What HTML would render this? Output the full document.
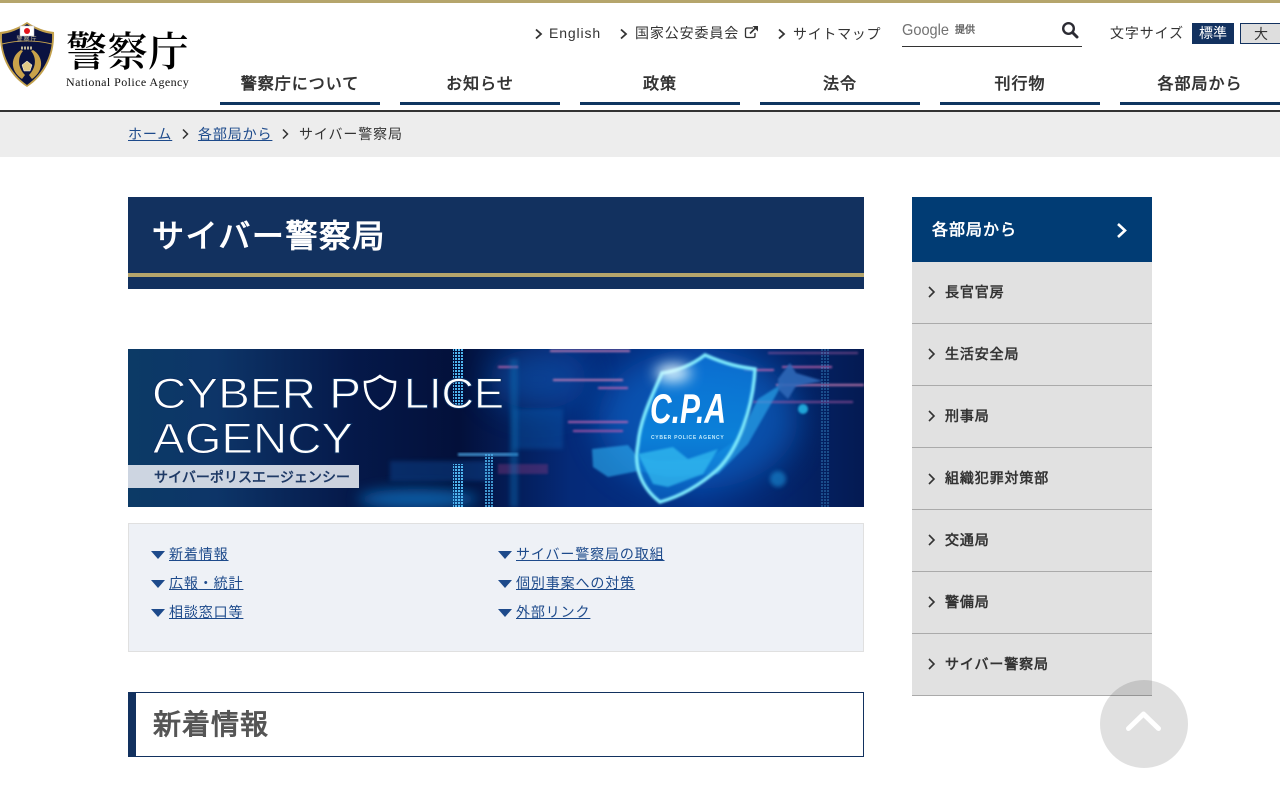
<!DOCTYPE html>
<html lang="ja"><head><meta charset="utf-8"><title>サイバー警察局</title>
<style>
html,body{margin:0;padding:0;background:#fff}
body{position:relative;width:1280px;height:800px;overflow:hidden;font-family:"Liberation Sans","WenQuanYi Zen Hei",sans-serif;color:#333;font-size:14px;letter-spacing:.88px}
.a{position:absolute;white-space:nowrap}
a{color:#1d4a8b;text-decoration:underline}
.nav{position:absolute;top:73px;width:160px;height:29px;border-bottom:3px solid #0f3560;text-align:center;font-weight:bold;font-size:16px;line-height:24px;color:#333;letter-spacing:1px}
.t{line-height:20px}
.side{position:absolute;left:912px;width:240px;height:61px;background:#e1e1e1;border-bottom:1px solid #aaa;font-weight:bold;font-size:14px;line-height:60px;text-indent:33px;color:#333}
.ch{position:absolute}
.tri{position:absolute;width:0;height:0;border-left:7px solid transparent;border-right:7px solid transparent;border-top:8px solid #1d4a8b}
.dot{font-family:"Noto Sans CJK JP",sans-serif}
</style></head><body>
<div class="a" style="left:0;top:0;width:1280px;height:3px;background:#b5a56c"></div>

<svg class="a" style="left:0;top:20px" width="56" height="70" viewBox="0 0 56 70">
<path d="M27 2 C36 8 45 11 54 12 C55 34 46 55 27 67 C8 55 -1 34 0 12 C9 11 18 8 27 2Z" fill="#c2a04c"/>
<path d="M27 4 C36 10 44 13 52 14 C53 34 44 53 27 65 C10 53 1 34 2 14 C10 13 18 10 27 4Z" fill="#0a1240"/>
<rect x="20" y="6" width="14" height="10" fill="#fff" stroke="#b9b9c9" stroke-width=".5"/><circle cx="27" cy="11" r="3" fill="#e3141c"/>
<path d="M2 24 C18 20 36 20 52 24" stroke="#c2a04c" fill="none" stroke-width="1"/>
<text x="27" y="21" font-size="6" fill="#c9c2a0" text-anchor="middle" letter-spacing="1">警察庁</text>
<path d="M21 30 C11 36 9 50 22 59 L25 55 C18 48 17 38 23 31Z M33 30 C43 36 45 50 32 59 L29 55 C36 48 37 38 31 31Z" fill="#c9a24a"/>
<path d="M27 41 L32 45 L30 51 H24 L22 45Z" fill="#e0c987" stroke="#fff" stroke-width=".5"/>
<path d="M21 28 H33" stroke="#bfb79a" stroke-width="3" stroke-dasharray="2 1"/>
</svg>
<div class="a" style="left:66px;top:26px;font-family:'Liberation Serif','Noto Serif CJK JP','Noto Serif CJK SC',serif;font-size:41px;line-height:52px;letter-spacing:0;color:#000;font-weight:600">警察庁</div>
<div class="a" style="left:66px;top:74px;font-family:'Liberation Serif',serif;font-size:12px;line-height:16px;letter-spacing:.42px;color:#111">National Police Agency</div>

<svg class="ch" style="left:534px;top:28px" width="9" height="12"><path d="M2 1.5 L7 6 L2 10.5" fill="none" stroke="#333" stroke-width="1.8"/></svg>
<div class="a t" style="left:549px;top:23px">English</div>
<svg class="ch" style="left:619px;top:28px" width="9" height="12"><path d="M2 1.5 L7 6 L2 10.5" fill="none" stroke="#333" stroke-width="1.8"/></svg>
<div class="a t" style="left:635px;top:23px">国家公安委員会</div>
<svg class="ch" style="left:744px;top:25px" width="15" height="14"><path d="M9 3 H3 Q1.5 3 1.5 4.5 V11 Q1.5 12.5 3 12.5 H9.500 Q11 12.500 11 11 V8" fill="none" stroke="#333" stroke-width="1.300"/><path d="M6 8.500 L12 2.500" stroke="#333" stroke-width="1.600"/><path d="M8.500 1 H14 V6.500Z" fill="#333"/></svg>
<svg class="ch" style="left:777px;top:28px" width="9" height="12"><path d="M2 1.5 L7 6 L2 10.5" fill="none" stroke="#333" stroke-width="1.8"/></svg>
<div class="a t" style="left:793px;top:24px;letter-spacing:.7px">サイトマップ</div>

<svg class="a" style="left:902px;top:18px" width="50" height="24"><text x="0" y="17" font-family="Liberation Sans,sans-serif" font-size="16" fill="#727272" textLength="47" lengthAdjust="spacingAndGlyphs" letter-spacing="0">Google</text></svg>
<div class="a" style="left:955px;top:24px;font-size:10px;line-height:14px;letter-spacing:0;color:#666;font-weight:bold">提供</div>
<div class="a" style="left:902px;top:46px;width:180px;height:1px;background:#333"></div>
<svg class="ch" style="left:1061px;top:21px" width="18" height="18"><circle cx="7.500" cy="7.500" r="5.300" fill="none" stroke="#2b2b33" stroke-width="2.400"/><path d="M11.500 11.500 L16 16" stroke="#2b2b33" stroke-width="3" stroke-linecap="round"/></svg>
<div class="a t" style="left:1110px;top:23px">文字サイズ</div>
<div class="a" style="left:1192px;top:23px;width:42px;height:21px;background:#12315f;color:#fff;text-align:center;line-height:21px;letter-spacing:0">標準</div>
<div class="a" style="left:1240px;top:23px;width:40px;height:19px;background:#dedede;border:1px solid #12315f;box-sizing:content-box;text-align:center;line-height:21px;color:#333;letter-spacing:0">大</div>

<div class="nav" style="left:220px">警察庁について</div>
<div class="nav" style="left:400px">お知らせ</div>
<div class="nav" style="left:580px">政策</div>
<div class="nav" style="left:760px">法令</div>
<div class="nav" style="left:940px">刊行物</div>
<div class="nav" style="left:1120px">各部局から</div>
<div class="a" style="left:0;top:110px;width:1280px;height:2px;background:#333"></div>

<div class="a" style="left:0;top:112px;width:1280px;height:45px;background:#ededed"></div>
<a class="a t" style="left:128px;top:124px">ホーム</a>
<svg class="ch" style="left:181px;top:128px" width="9" height="12"><path d="M2 1.500 L6.500 6 L2 10.500" fill="none" stroke="#333" stroke-width="1.500"/></svg>
<a class="a t" style="left:198px;top:124px">各部局から</a>
<svg class="ch" style="left:281px;top:128px" width="9" height="12"><path d="M2 1.500 L6.500 6 L2 10.500" fill="none" stroke="#333" stroke-width="1.500"/></svg>
<div class="a t" style="left:299px;top:124px">サイバー警察局</div>

<div class="a" style="left:128px;top:197px;width:736px;height:92px;background:#12315f"></div>
<div class="a" style="left:128px;top:273px;width:736px;height:4px;background:#b5a56c"></div>
<div class="a" style="left:152px;top:213px;font-size:32px;line-height:46px;font-weight:bold;color:#fff;letter-spacing:1.5px">サイバー警察局</div>

<svg class="a" style="left:128px;top:349px" width="736" height="158" viewBox="0 0 736 158">
<defs>
<linearGradient id="bg" x1="0" x2="1" y1="0" y2="0"><stop offset="0" stop-color="#0c3a66"/><stop offset=".12" stop-color="#0d3568"/><stop offset=".3" stop-color="#05194a"/><stop offset=".45" stop-color="#03103a"/><stop offset=".6" stop-color="#052a78"/><stop offset=".78" stop-color="#052f84"/><stop offset="1" stop-color="#041a52"/></linearGradient>
<filter id="b2" x="-50%" y="-50%" width="200%" height="200%"><feGaussianBlur stdDeviation="2"/></filter>
<filter id="b1" x="-20%" y="-20%" width="140%" height="140%"><feGaussianBlur stdDeviation="1"/></filter>
<filter id="b6" x="-100%" y="-100%" width="300%" height="300%"><feGaussianBlur stdDeviation="7"/></filter>
<filter id="b14" x="-100%" y="-100%" width="300%" height="300%"><feGaussianBlur stdDeviation="16"/></filter>
<pattern id="dots" width="3" height="3" patternUnits="userSpaceOnUse"><rect width="2" height="2" fill="#4fb6f0"/></pattern>
<linearGradient id="sh" x1="0" x2="0" y1="0" y2="1"><stop offset="0" stop-color="#0c78dc"/><stop offset=".55" stop-color="#0c90e6"/><stop offset="1" stop-color="#0a62c4"/></linearGradient>
</defs>
<rect width="736" height="158" fill="url(#bg)"/>
<ellipse cx="570" cy="70" rx="100" ry="70" fill="#0a6fd8" opacity=".55" filter="url(#b14)"/>
<ellipse cx="290" cy="150" rx="60" ry="10" fill="#0c6fc0" opacity=".8" filter="url(#b6)"/>
<ellipse cx="410" cy="30" rx="50" ry="30" fill="#0a55b0" opacity=".6" filter="url(#b14)"/>
<rect x="262" y="112" width="100" height="20" fill="#0a4fa0" opacity=".4" filter="url(#b2)"/>
<rect x="325" y="0" width="10" height="60" fill="url(#dots)"/>
<rect x="325" y="115" width="10" height="43" fill="url(#dots)"/>
<rect x="357" y="105" width="9" height="53" fill="url(#dots)" opacity=".8"/>
<rect x="330" y="104" width="60" height="3" fill="#4ba8e6" opacity=".8" filter="url(#b1)"/>
<g filter="url(#b1)" opacity=".8">
<rect x="425" y="30" width="70" height="2" fill="#e58ac0"/><rect x="470" y="38" width="30" height="2" fill="#d56ab5"/>
<rect x="440" y="72" width="60" height="2" fill="#d96bb8"/><rect x="445" y="81" width="50" height="2" fill="#c75cb0"/>
<rect x="422" y="1" width="80" height="2" fill="#e58ac0"/><rect x="370" y="17" width="20" height="2" fill="#d56ab5"/>
<rect x="640" y="3" width="90" height="2" fill="#c968b0" opacity=".6"/><rect x="648" y="35" width="88" height="2" fill="#e58ac0"/>
<rect x="616" y="20" width="30" height="2" fill="#d56ab5"/><rect x="654" y="17" width="50" height="2" fill="#d56ab5"/>
<rect x="625" y="52" width="100" height="2" fill="#b05aa8" opacity=".8"/><rect x="370" y="115" width="50" height="10" fill="#8a3a80" opacity=".5"/>
</g>
<rect x="385" y="60" width="50" height="40" fill="#0a6ac0" opacity=".3" filter="url(#b2)"/>
<rect x="382" y="10" width="8" height="148" fill="#0e72b8" opacity=".4" filter="url(#b2)"/>
<rect x="692" y="0" width="10" height="158" fill="url(#dots)" opacity=".3"/>
<circle cx="675" cy="60" r="5" fill="#25c3f0" opacity=".8" filter="url(#b1)"/><circle cx="650" cy="130" r="8" fill="#1aa0e8" opacity=".5" filter="url(#b2)"/>
<path d="M464 100 L500 96 L510 108 L530 112 L580 110 L610 90 L630 50 L655 34 L640 60 L620 95 L590 125 L540 128 L510 122 L480 128 L465 118Z" fill="#2aa8ec" opacity=".65" filter="url(#b1)"/>
<path d="M650 30 L662 14 L668 24 L695 32 L668 37 L660 50 L650 40Z" fill="#2f68b8" opacity=".9" filter="url(#b1)"/>
<path d="M577 6 C600 16 612 18 627 20 C625 60 610 100 590 120 C570 138 550 148 532 153 C515 140 505 120 510 95 C512 70 525 45 534 24 C550 22 565 15 577 6Z" fill="url(#sh)" opacity=".75"/>
<path d="M577 6 C600 16 612 18 627 20 C625 60 610 100 590 120 C570 138 550 148 532 153 C515 140 505 120 510 95 C512 70 525 45 534 24 C550 22 565 15 577 6Z" fill="none" stroke="#7ce8fc" stroke-width="3.500" filter="url(#b1)"/>
<path d="M510 105 L545 98 L560 110 L590 100 L575 125 L540 138 L525 135Z" fill="#35c0f3" opacity=".7" filter="url(#b1)"/>
<ellipse cx="545" cy="24" rx="18" ry="9" fill="#e8fbff" opacity=".95" filter="url(#b6)"/>
<text x="522" y="74" font-family="Liberation Sans,sans-serif" font-size="42" font-style="italic" font-weight="bold" fill="#fff" textLength="76" lengthAdjust="spacingAndGlyphs" letter-spacing="0">C.P.A</text>
<text x="523" y="90" font-family="Liberation Sans,sans-serif" font-size="5" font-weight="bold" fill="#bfe9fb" letter-spacing="1.300" textLength="74">CYBER POLICE AGENCY</text>
<g font-family="Liberation Sans,sans-serif" fill="#fff" stroke="#0b2f62" stroke-width=".9" letter-spacing="0">
<text x="24" y="59" font-size="43" textLength="209" lengthAdjust="spacingAndGlyphs">CYBER P</text>
<text x="276" y="59" font-size="43" textLength="100" lengthAdjust="spacingAndGlyphs">LICE</text>
<text x="25" y="104" font-size="43" textLength="200" lengthAdjust="spacingAndGlyphs">AGENCY</text>
</g>
<path d="M252 27 C257 31 262 33 267 33 C267 46 262 55 252 60 C242 55 237 46 237 33 C242 33 247 31 252 27Z" fill="none" stroke="#fff" stroke-width="2.600"/>
<rect x="0" y="116" width="231" height="23" fill="#e2e7ee" opacity=".9"/>
<text x="26" y="133" font-family="Liberation Sans,WenQuanYi Zen Hei,sans-serif" font-size="14" font-weight="bold" fill="#1f3a66" textLength="196" letter-spacing="0">サイバーポリスエージェンシー</text>
</svg>

<div class="a" style="left:128px;top:523px;width:734px;height:127px;background:#eef1f6;border:1px solid #e0e0e0"></div>
<div class="tri" style="left:151px;top:551px"></div><a class="a t" style="left:169px;top:544px">新着情報</a>
<div class="tri" style="left:151px;top:580px"></div><a class="a t" style="left:169px;top:573px">広報<span class="dot">・</span>統計</a>
<div class="tri" style="left:151px;top:609px"></div><a class="a t" style="left:169px;top:602px">相談窓口等</a>
<div class="tri" style="left:498px;top:551px"></div><a class="a t" style="left:516px;top:544px">サイバー警察局の取組</a>
<div class="tri" style="left:498px;top:580px"></div><a class="a t" style="left:516px;top:573px">個別事案への対策</a>
<div class="tri" style="left:498px;top:609px"></div><a class="a t" style="left:516px;top:602px">外部リンク</a>

<div class="a" style="left:128px;top:692px;width:727px;height:63px;border:1px solid #12315f;border-left:8px solid #12315f"></div>
<div class="a" style="left:153px;top:704px;font-size:28px;line-height:42px;font-weight:bold;color:#555;letter-spacing:1px">新着情報</div>

<div class="a" style="left:912px;top:197px;width:240px;height:65px;background:#013c74"></div>
<div class="a" style="left:932px;top:219px;font-size:16px;line-height:24px;font-weight:bold;color:#fff;letter-spacing:1px">各部局から</div>
<svg class="ch" style="left:1115px;top:222px" width="14" height="17"><path d="M3 2 L10 8.500 L3 15" fill="none" stroke="#fff" stroke-width="2.600"/></svg>
<div class="side" style="top:262px">長官官房</div>
<div class="side" style="top:324px">生活安全局</div>
<div class="side" style="top:386px">刑事局</div>
<div class="side" style="top:448px">組織犯罪対策部</div>
<div class="side" style="top:510px">交通局</div>
<div class="side" style="top:572px">警備局</div>
<div class="side" style="top:634px">サイバー警察局</div>
<svg class="ch" style="left:927px;top:286px" width="10" height="400"><g fill="none" stroke="#333" stroke-width="1.600"><path d="M2 1 L7 6 L2 11"/><path d="M2 63 L7 68 L2 73"/><path d="M2 125 L7 130 L2 135"/><path d="M2 188 L7 193 L2 198"/><path d="M2 249 L7 254 L2 259"/><path d="M2 311 L7 316 L2 321"/><path d="M2 373 L7 378 L2 383"/></g></svg>

<div class="a" style="left:1100px;top:680px;width:88px;height:88px;border-radius:50%;background:rgba(0,0,0,.12)"></div>
<svg class="ch" style="left:1120px;top:704px" width="48" height="36"><path d="M8.500 24.500 L23.500 10 L38.500 24.500" fill="none" stroke="#fff" stroke-width="5" stroke-linecap="round" stroke-linejoin="round"/></svg>
</body></html>
